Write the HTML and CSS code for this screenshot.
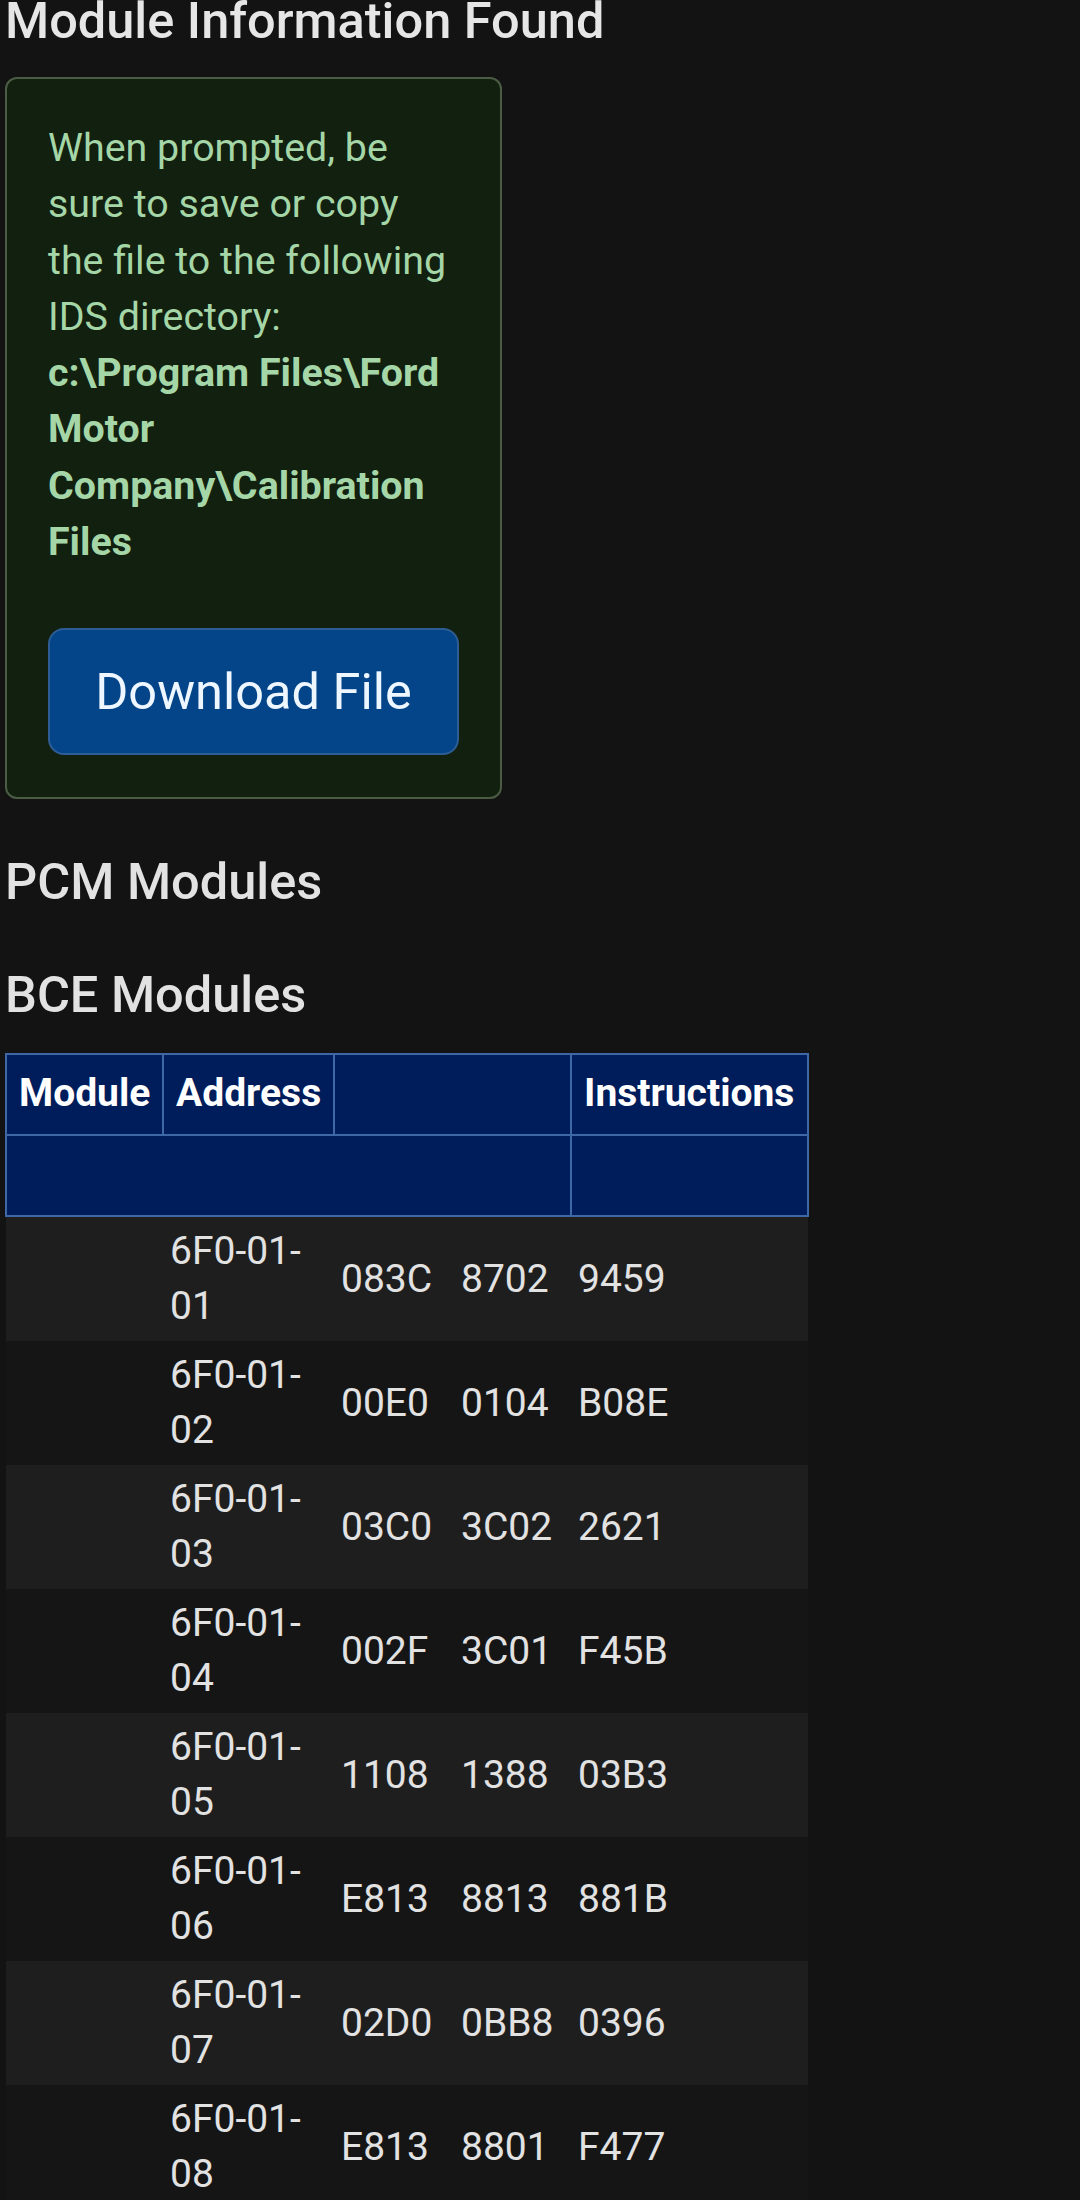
FILE: index.html
```html
<!DOCTYPE html>
<html lang="en">
<head>
  <meta charset="UTF-8">
  <meta name="viewport" content="width=device-width, initial-scale=1.0">
  <title>Module Information Found</title>
  <link rel="stylesheet" href="styles.css">
</head>
<body>
  <h1 class="page-title">Module Information Found</h1>

  <div class="notice">
    <p>When prompted, be sure to save or copy the file to the following IDS directory: <strong>c:\Program Files\Ford Motor Company\Calibration Files</strong></p>
    <button class="download-btn">Download File</button>
  </div>

  <h2 class="section-title">PCM Modules</h2>
  <h2 class="section-title">BCE Modules</h2>

  <table class="module-table">
    <colgroup>
      <col class="col-module">
      <col class="col-address">
      <col class="col-value">
      <col class="col-value2">
      <col class="col-instructions">
    </colgroup>
    <thead>
      <tr>
        <th>Module</th>
        <th>Address</th>
        <th colspan="2"></th>
        <th>Instructions</th>
      </tr>
      <tr>
        <th colspan="4">&nbsp;</th>
        <th>&nbsp;</th>
      </tr>
    </thead>
    <tbody id="moduleRows">
      <!-- filas generadas abajo -->
    </tbody>
  </table>

  <script>
    const modules = [
      { address: "6F0-01-01", data: ["083C", "8702", "9459"] },
      { address: "6F0-01-02", data: ["00E0", "0104", "B08E"] },
      { address: "6F0-01-03", data: ["03C0", "3C02", "2621"] },
      { address: "6F0-01-04", data: ["002F", "3C01", "F45B"] },
      { address: "6F0-01-05", data: ["1108", "1388", "03B3"] },
      { address: "6F0-01-06", data: ["E813", "8813", "881B"] },
      { address: "6F0-01-07", data: ["02D0", "0BB8", "0396"] },
      { address: "6F0-01-08", data: ["E813", "8801", "F477"] }
    ];

    function renderModules() {
      const body = document.getElementById("moduleRows");
      body.innerHTML = "";
      modules.forEach((mod) => {
        const row = document.createElement("tr");
        const parts = mod.address.split("-");
        const addr = parts.slice(0, 2).join("-") + "-<wbr>" + parts[2];
        row.innerHTML = `
          <td></td>
          <td>${addr}</td>
          <td>${mod.data[0]}</td>
          <td>${mod.data[1]}</td>
          <td>${mod.data[2]}</td>
        `;
        body.appendChild(row);
      });
    }

    renderModules();
  </script>
</body>
</html>
```

FILE: styles.css
```css
html {
  background-color: #131313;
}

body {
  font-family: 'Roboto', 'Noto Sans', sans-serif;
  margin: 0;
  padding: 0 5px;
  background-color: #131313;
  color: #e4e4e4;
}

.page-title {
  margin: -9px 0 26px;
  font-size: 50.5px;
  line-height: 60px;
  font-weight: 500;
  color: #e6e6e6;
}

.notice {
  width: 497px;
  box-sizing: border-box;
  padding: 41px 41px 42px;
  background-color: #12200f;
  border: 2px solid #4a5c44;
  border-radius: 12px;
}

.notice p {
  margin: 0 0 58px;
  font-size: 39.4px;
  line-height: 56.3px;
  color: #a5d6a7;
}

.notice strong {
  font-weight: 700;
}

.download-btn {
  display: block;
  width: 100%;
  padding: 32px 0;
  font-family: inherit;
  font-size: 50.5px;
  line-height: 59px;
  color: #eef6ff;
  background-color: #034588;
  border: 2px solid #2d5d94;
  border-radius: 16px;
  cursor: pointer;
}

.section-title {
  margin: 53px 0 28px;
  font-size: 50.5px;
  line-height: 60px;
  font-weight: 500;
  color: #e2e2e2;
}

.module-table {
  width: 802px;
  table-layout: fixed;
  border-collapse: collapse;
}

.col-module { width: 157px; }
.col-address { width: 171px; }
.col-value { width: 120px; }
.col-value2 { width: 117px; }
.col-instructions { width: 237px; }

.module-table th {
  padding: 11px 12px 13px;
  font-size: 39px;
  line-height: 55px;
  font-weight: 700;
  color: #ffffff;
  text-align: left;
  background-color: #001d5b;
  border: 2px solid #3d68a5;
}

.module-table td {
  padding: 7px;
  font-size: 39px;
  line-height: 55px;
  color: #e2e2e2;
  vertical-align: middle;
}

.module-table tbody tr:nth-child(odd) {
  background-color: #1e1e1e;
}

.module-table tbody tr:nth-child(even) {
  background-color: #151515;
}
```
